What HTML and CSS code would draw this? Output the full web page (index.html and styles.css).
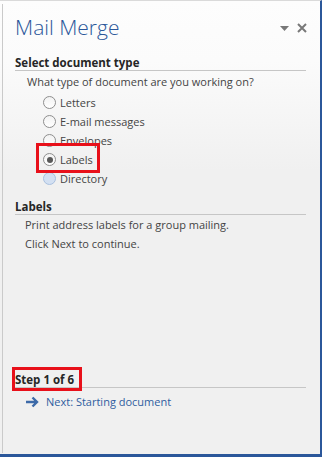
FILE: index.html
```html
<!DOCTYPE html>
<html lang="en">
<head>
    <meta charset="UTF-8">
    <title>Mail Merge</title>
    <link rel="stylesheet" href="styles.css">
</head>
<body>

<div class="pane">
    <div class="pane-inner">
        <header class="pane-header">
            <h1>Mail Merge</h1>
            <div class="pane-controls">
                <svg class="ctl-menu" width="9" height="5" viewBox="0 0 9 5"><path d="M0 0 H9 L4.5 5 Z" fill="currentColor"/></svg>
                <svg class="ctl-close" width="10" height="10" viewBox="0 0 10 10"><path d="M1 1 L9 9 M9 1 L1 9" stroke="currentColor" stroke-width="2"/></svg>
            </div>
        </header>

        <section class="group">
            <h2 class="group-title">Select document type</h2>
            <p class="prompt">What type of document are you working on?</p>
            <ul class="options">
                <li><span class="radio"></span>Letters</li>
                <li><span class="radio"></span>E-mail messages</li>
                <li><span class="radio"></span>Envelopes</li>
                <li class="marked"><span class="radio checked"></span>Labels<span class="callout callout-option"></span></li>
                <li><span class="radio hover"></span>Directory</li>
            </ul>
        </section>

        <section class="group group-info">
            <h2 class="group-title">Labels</h2>
            <p class="info">Print address labels for a group mailing.</p>
            <p class="info">Click Next to continue.</p>
        </section>

        <div class="spacer"></div>

        <section class="step">
            <h2 class="group-title step-title">Step 1 of 6<span class="callout callout-step"></span></h2>
            <a class="next-link" href="#">
                <svg width="13" height="12" viewBox="0 0 13 12"><path d="M0 6 H11 M6.5 1.5 L11 6 L6.5 10.5" fill="none" stroke="currentColor" stroke-width="2.4"/></svg>
                <span>Next: Starting document</span>
            </a>
        </section>
    </div>
</div>

</body>
</html>
```

FILE: styles.css
```css
:root {
    --accent: #2b579a;
    --link: #2f5d9f;
    --text: #444444;
    --heading: #262626;
    --rule: #c6c6c6;
    --callout: #e8101a;
    --font-ui: 'Segoe UI', 'Open Sans', sans-serif;
}

* { margin: 0; padding: 0; box-sizing: border-box; }

body {
    font-family: var(--font-ui);
    font-size: 11px;
    color: var(--text);
    background: #f0f0f0;
}

/* --- Task pane frame --- */
.pane {
    width: 322px;
    height: 457px;
    border-top: 1px solid #dadada;
    border-right: 2px solid var(--accent);
    border-bottom: 3px solid var(--accent);
    padding: 3px 0 1px 2px;
    background: linear-gradient(#fdfdfd 0, #fbfbfb 60px, #f0f0f0 170px);
    display: flex;
}
.pane-inner {
    flex: 1;
    border-left: 1px solid #cacaca;
    padding: 9px 14px 0 12px;
    display: flex;
    flex-direction: column;
}

/* --- Header --- */
.pane-header {
    display: flex;
    justify-content: space-between;
    align-items: flex-start;
}
.pane-header h1 {
    font-weight: 300;
    font-size: 21px;
    line-height: 28px;
    color: var(--accent);
}
.pane-controls {
    display: flex;
    align-items: center;
    gap: 8px;
    color: #787878;
    padding-top: 10px;
    margin-right: -1px;
}
.ctl-menu { margin-top: 1px; }

/* --- Groups --- */
.group { margin-top: 15px; }
.group-info { margin-top: 12px; }

.group-title {
    font-size: 11.5px;
    font-weight: 700;
    line-height: 14px;
    color: var(--heading);
    border-bottom: 1px solid var(--rule);
}

.prompt {
    line-height: 19px;
    margin: 1px 0 2px 12px;
}

.options {
    list-style: none;
    padding-left: 28px;
}
.options li {
    display: flex;
    align-items: center;
    gap: 4px;
    height: 19px;
    line-height: 19px;
}
.options li.marked { position: relative; }

.radio {
    width: 13px;
    height: 13px;
    border-radius: 50%;
    border: 1px solid #8e8e8e;
    background: linear-gradient(#f2f2f2, #ffffff);
    display: flex;
    align-items: center;
    justify-content: center;
    flex-shrink: 0;
}
.radio.checked::after {
    content: '';
    width: 6px;
    height: 6px;
    border-radius: 50%;
    background: #585858;
}
.radio.hover {
    border-color: #a9c0df;
    background: #d3e0f2;
}

.info {
    line-height: 19px;
    padding-left: 10px;
}

.spacer { flex: 1; }

/* --- Step footer --- */
.step { padding-bottom: 42px; }
.step-title { position: relative; }

.next-link {
    display: flex;
    align-items: center;
    gap: 7px;
    margin: 4px 0 0 11px;
    line-height: 19px;
    color: var(--link);
    text-decoration: none;
}
.next-link svg { color: #3d6aa8; }

/* --- Red annotation boxes --- */
.callout {
    position: absolute;
    border: 3px solid var(--callout);
    pointer-events: none;
}
.callout-option {
    left: -7px;
    top: -7px;
    width: 64px;
    height: 30px;
}
.callout-step {
    left: -3px;
    top: -6px;
    width: 70px;
    height: 24px;
}
```
